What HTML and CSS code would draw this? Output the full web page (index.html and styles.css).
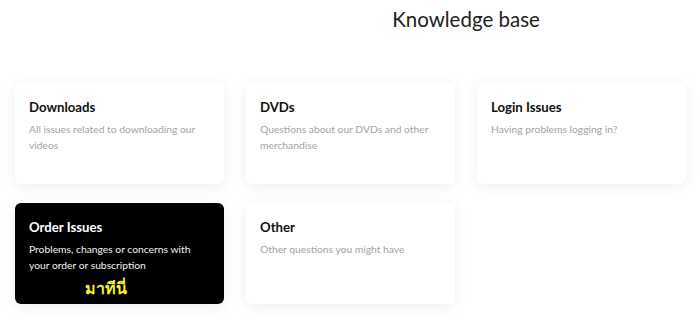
FILE: index.html
```html
<!DOCTYPE html>
<html lang="en">
<head>
  <meta charset="UTF-8">
  <title>Knowledge base</title>
  <link rel="stylesheet" href="styles.css">
</head>
<body>
  <h1 class="page-title">Knowledge base</h1>

  <div class="topic-grid">
    <div class="topic-card">
      <h2>Downloads</h2>
      <p>All issues related to downloading our videos</p>
    </div>
    <div class="topic-card">
      <h2>DVDs</h2>
      <p>Questions about our DVDs and other merchandise</p>
    </div>
    <div class="topic-card">
      <h2>Login Issues</h2>
      <p>Having problems logging in?</p>
    </div>
    <div class="topic-card dark">
      <h2>Order Issues</h2>
      <p>Problems, changes or concerns with your order or subscription</p>
      <div class="here-tag">มาทีนี่</div>
    </div>
    <div class="topic-card">
      <h2>Other</h2>
      <p>Other questions you might have</p>
    </div>
  </div>
</body>
</html>
```

FILE: styles.css
```css
html, body {
  margin: 0;
  padding: 0;
  background: #ffffff;
  font-family: Lato, "Noto Sans", "Noto Sans CJK SC", sans-serif;
  color: #1a1a1a;
}
.page-title {
  margin: 0;
  padding: 7px 0 0 232px;
  height: 77px;
  box-sizing: border-box;
  text-align: center;
  font-size: 20.5px;
  font-weight: 400;
  color: #222;
}
.topic-grid {
  display: grid;
  grid-template-columns: repeat(3, 209px);
  grid-auto-rows: 101px;
  column-gap: 22px;
  row-gap: 19px;
  padding: 6px 15px 30px;
}
.topic-card {
  background: #fff;
  border-radius: 6px;
  box-shadow: 0 2px 14px rgba(0, 0, 0, 0.07);
  padding: 14px 14px 0;
  box-sizing: border-box;
}
.topic-card h2 {
  margin: 0 0 4px;
  font-size: 13.2px;
  font-weight: 700;
  line-height: 20px;
  color: #111;
}
.topic-card p {
  margin: 0;
  font-size: 10.3px;
  line-height: 16px;
  color: #a3a3a3;
}
.topic-card.dark {
  background: #000;
}
.topic-card.dark h2 {
  color: #fff;
}
.topic-card.dark p {
  color: #f2f2f2;
}
.here-tag {
  margin-top: 4px;
  padding-left: 56px;
  font-size: 16px;
  font-weight: 700;
  line-height: 22px;
  color: #f5f02a;
}
```
